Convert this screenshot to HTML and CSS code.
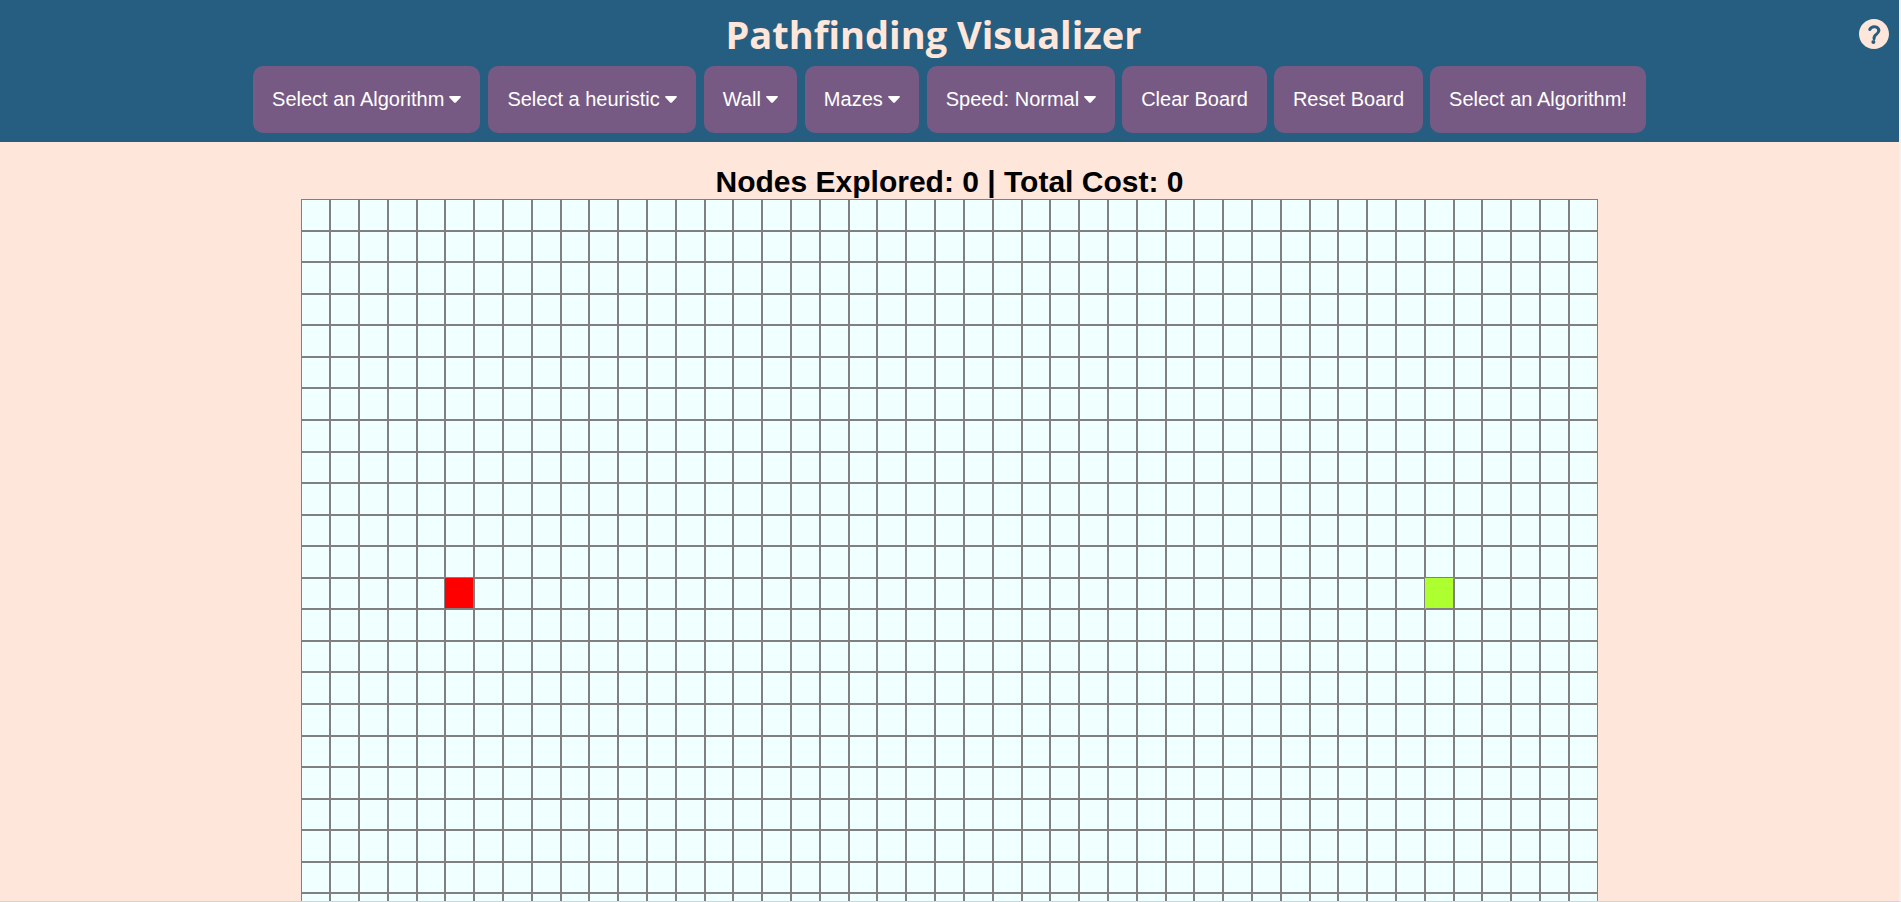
FILE: index.html
```html
<!DOCTYPE html>
<html lang="en">
<head>
<meta charset="utf-8">
<title>Pathfinding Visualizer</title>
<link rel="stylesheet" href="styles.css">
</head>
<body>
<header class="header">
  <div class="title-row">
    <h1 class="title">Pathfinding Visualizer</h1>
    <button class="help" type="button" aria-label="Help">
      <svg class="help-icon" viewBox="0 0 24 24" aria-hidden="true"><path d="M12 2C6.480 2 2 6.480 2 12s4.480 10 10 10 10-4.480 10-10S17.520 2 12 2zm-.4 16.700a1.350 1.350 0 1 1 0-2.700 1.350 1.350 0 0 1 0 2.700zm3.700-7c-.8 1.150-1.550 1.500-2 2.250-.15.300-.25.500-.25 1.250 0 .55-.45 1-1 1s-1-.45-1-1c0-.7.050-1.500.6-2.350.65-1.050 1.550-1.300 2.200-2.200.6-.9.350-2.500-1.700-2.500-1 0-1.600.55-1.900 1.150-.3.550-.8.900-1.400.650-.6-.25-.85-.95-.55-1.500.7-1.400 2-2.350 3.850-2.350 1.850 0 3.050.85 3.650 1.900.55.950.850 2.450-.5 3.700z"/></svg>
    </button>
  </div>
  <nav class="toolbar" aria-label="Controls">
    <div class="menus">
      <button class="btn" type="button" aria-haspopup="menu">Select an Algorithm <svg class="caret" viewBox="0 0 12 7" aria-hidden="true"><path d="M1 0h10c.9 0 1.200.8.7 1.300L6.900 6.400c-.5.5-1.300.5-1.800 0L.3 1.300C-.2.8.1 0 1 0z"/></svg></button>
      <button class="btn" type="button" aria-haspopup="menu">Select a heuristic <svg class="caret" viewBox="0 0 12 7" aria-hidden="true"><path d="M1 0h10c.9 0 1.200.8.7 1.300L6.900 6.400c-.5.5-1.300.5-1.800 0L.3 1.300C-.2.8.1 0 1 0z"/></svg></button>
      <button class="btn" type="button" aria-haspopup="menu">Wall <svg class="caret" viewBox="0 0 12 7" aria-hidden="true"><path d="M1 0h10c.9 0 1.200.8.7 1.300L6.900 6.400c-.5.5-1.300.5-1.800 0L.3 1.300C-.2.8.1 0 1 0z"/></svg></button>
      <button class="btn" type="button" aria-haspopup="menu">Mazes <svg class="caret" viewBox="0 0 12 7" aria-hidden="true"><path d="M1 0h10c.9 0 1.200.8.7 1.300L6.900 6.400c-.5.5-1.300.5-1.800 0L.3 1.300C-.2.8.1 0 1 0z"/></svg></button>
      <button class="btn" type="button" aria-haspopup="menu">Speed: Normal <svg class="caret" viewBox="0 0 12 7" aria-hidden="true"><path d="M1 0h10c.9 0 1.200.8.7 1.300L6.900 6.400c-.5.5-1.300.5-1.800 0L.3 1.300C-.2.8.1 0 1 0z"/></svg></button>
    </div>
    <button class="btn btn-action" type="button">Clear Board</button>
    <button class="btn btn-action" type="button">Reset Board</button>
    <button class="btn btn-action" type="button">Select an Algorithm!</button>
  </nav>
</header>
<main class="main">
  <h2 class="stats">Nodes Explored: 0 | Total Cost: 0</h2>
  <div class="board" id="board"></div>
</main>
<script src="board.js"></script>
</body>
</html>
```
FILE: styles.css
```css
* {
  box-sizing: border-box;
}

body {
  display: flex;
  flex-direction: column;
  margin: 0;
  height: 100vh;
  background: #ffe6da;
  border-right: 2px solid #f1f1f1;
  border-bottom: 1px solid #ccd6dd;
  font-family: "Liberation Sans", Arial, sans-serif;
}

.header {
  background: #265e82;
  padding: 8px 7px 9px;
}

.title-row {
  display: grid;
  grid-template-columns: 1fr 36px;
  align-items: center;
  height: 52px;
  padding-left: 4px;
}

.title {
  margin: 0;
  text-align: center;
  font: 700 38px/52px "Open Sans", "Noto Sans", sans-serif;
  color: #ffe6da;
}

.help {
  width: 36px;
  height: 36px;
  padding: 0;
  border: 0;
  background: none;
  cursor: pointer;
}

.help-icon {
  display: block;
  width: 36px;
  height: 36px;
  fill: #ffe6da;
}

.toolbar {
  display: flex;
  justify-content: center;
  gap: 7px;
  margin-top: 6px;
}

.menus {
  display: flex;
  gap: 8px;
}

.btn {
  display: flex;
  align-items: center;
  gap: 5px;
  padding: 22px 19px;
  border: 0;
  border-radius: 10px;
  background: #765a84;
  color: #fff;
  font: 20px/23px "Liberation Sans", Arial, sans-serif;
  white-space: nowrap;
  cursor: pointer;
}

.btn-action {
  padding: 22px 19px;
}

.caret {
  width: 12px;
  height: 7px;
  fill: #fff;
}

.main {
  flex: 1;
  min-height: 0;
  overflow: hidden;
  padding-top: 23px;
}

.stats {
  margin: 0;
  text-align: center;
  font-size: 30px;
  line-height: 34px;
}

.board {
  display: grid;
  grid-template: repeat(25, 3.5vh) / repeat(45, 1fr);
  width: 68.25%;
  margin: 0 auto;
}

.cell {
  background: #f0ffff;
  border: 1px solid #808080;
}

.start {
  background: #ff0000;
  border-top-color: #ff0000;
  border-left-color: #ff0000;
}

.target {
  background: #adff2f;
  border-top-color: #adff2f;
  border-left-color: #adff2f;
}
```
FILE: board.js
```js
const ROWS = 25;
const COLS = 45;
const START = { row: 12, col: 5 };
const TARGET = { row: 12, col: 39 };

const board = document.getElementById("board");
const at = (p, row, col) => p.row === row && p.col === col;

for (let row = 0; row < ROWS; row++) {
  for (let col = 0; col < COLS; col++) {
    const cell = document.createElement("div");
    cell.className = "cell";
    if (at(START, row, col)) cell.classList.add("start");
    if (at(TARGET, row, col)) cell.classList.add("target");
    board.append(cell);
  }
}
```
